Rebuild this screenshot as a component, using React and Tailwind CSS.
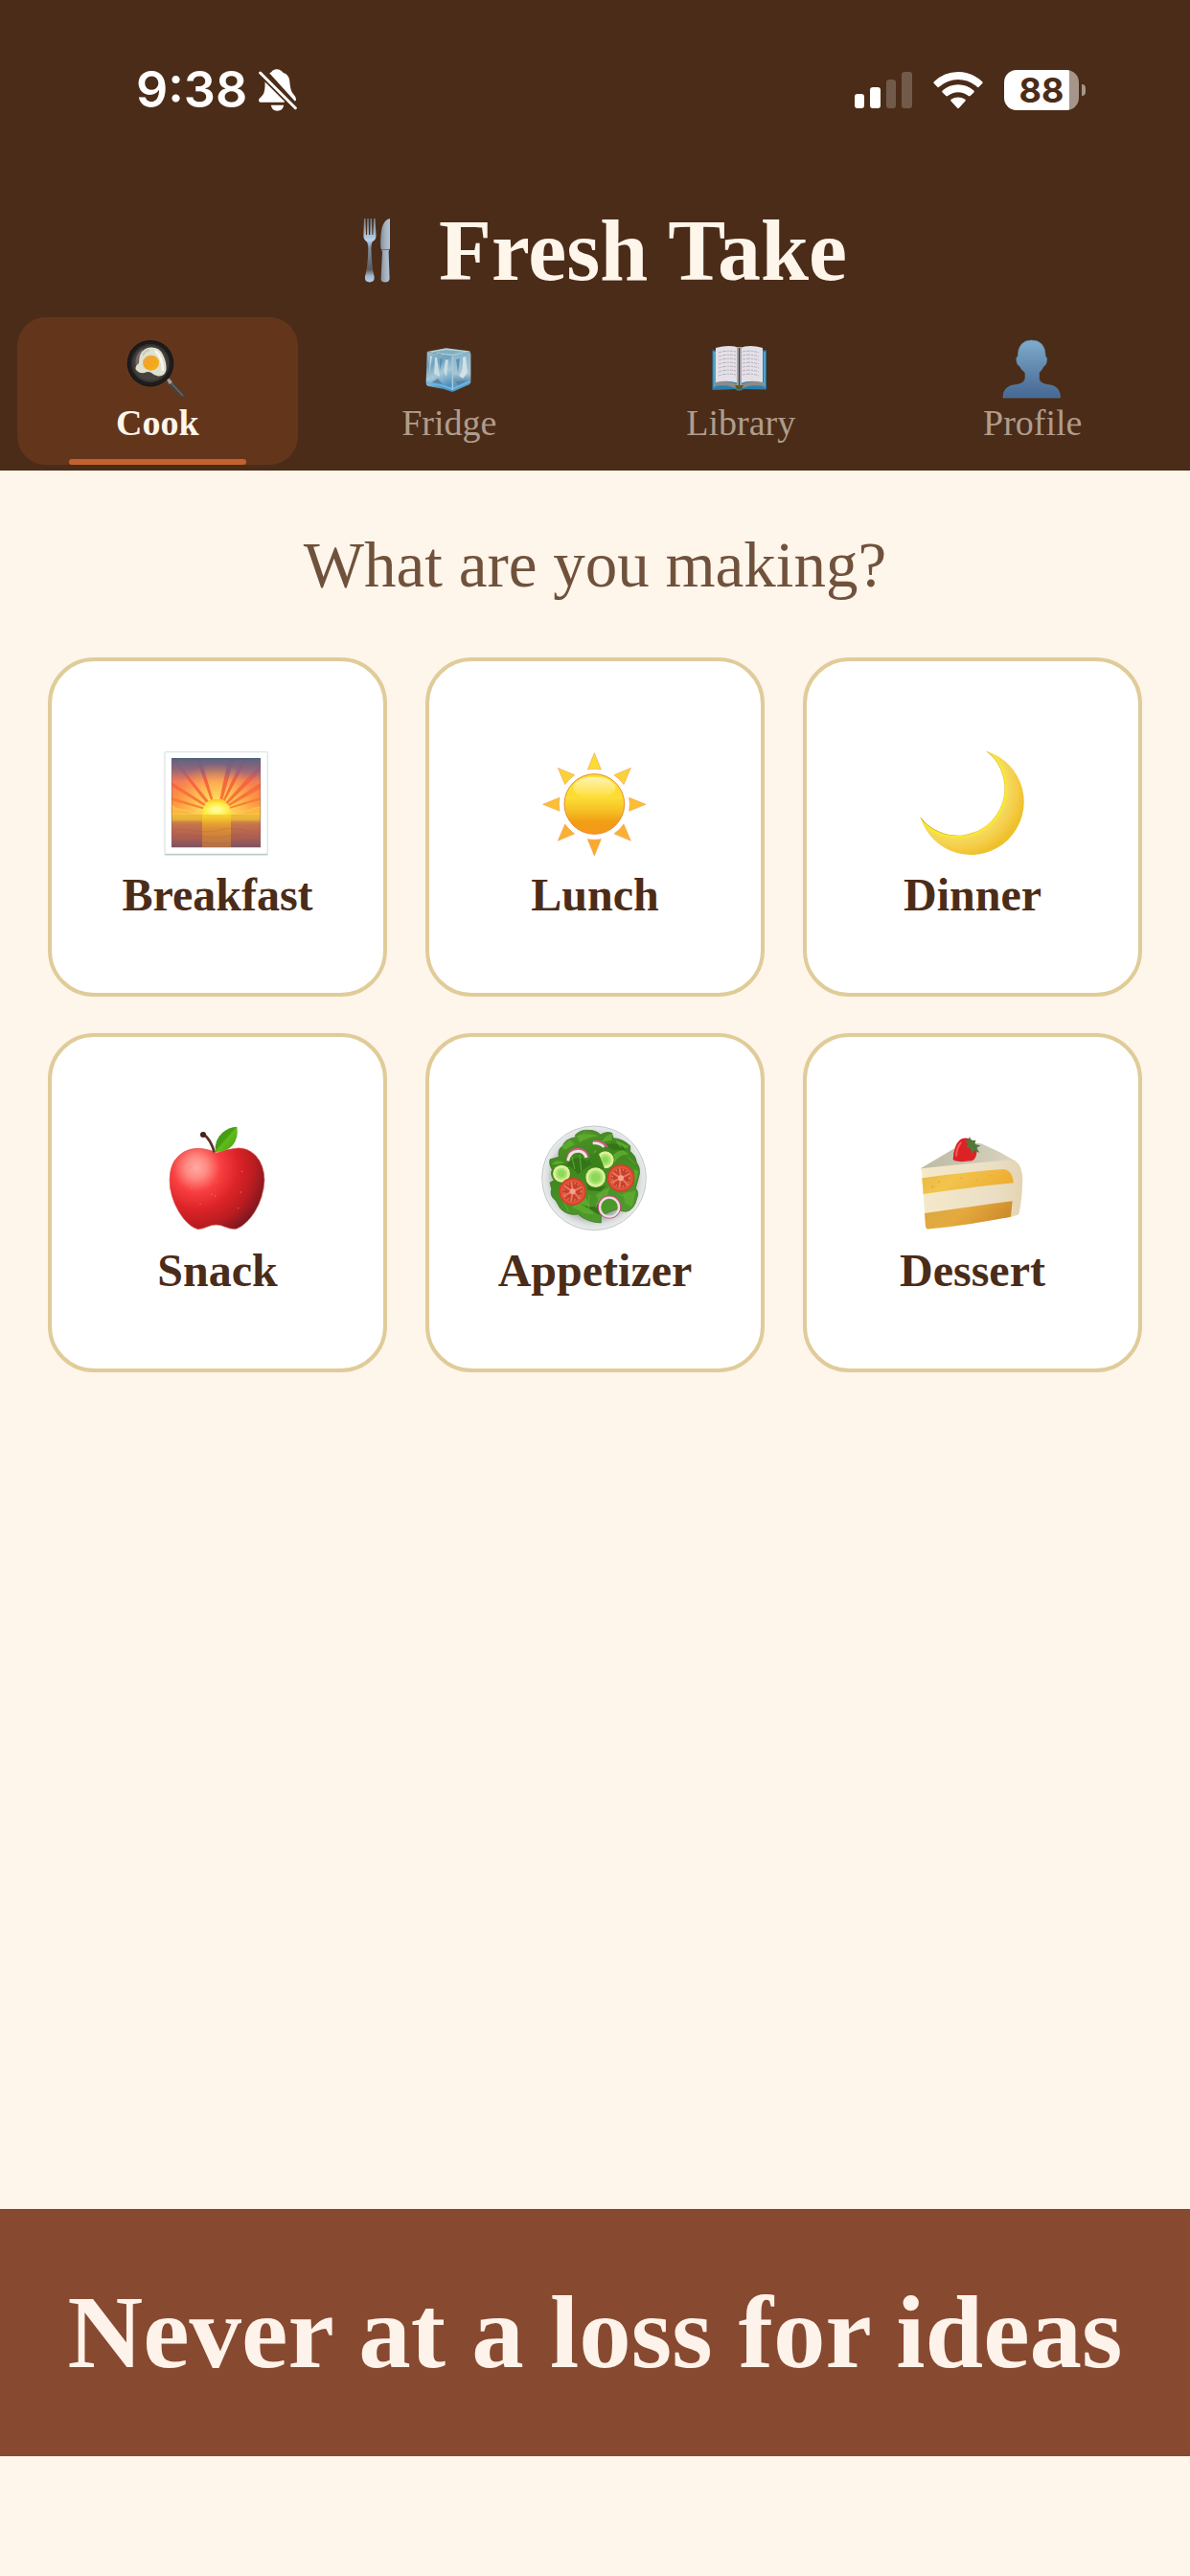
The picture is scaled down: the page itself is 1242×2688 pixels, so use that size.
import { useState } from "react"

function BellOffIcon() {
  return (
    <svg className="h-[44px] w-[40px]" viewBox="452 66 122 132" aria-hidden="true">
      <path
        fill="#fff"
        d="M472 106 L534 168 V171 H458 Q452 171 452 164 Q452 160 459 154 Q472 143 472 118 Z M486 78 Q492 76 496 70 Q503 66 510 66 Q520 66 525 72 Q530 78 538 80 Q551 90 551 108 Q553 132 560 142 Q571 154 571 162 Q571 167 567 167 Z M491 180 H532 Q529 198 511 198 Q494 198 491 180 Z"
      />
      <path d="M457 77 L569 189" stroke="#fff" strokeWidth="9" strokeLinecap="round" />
    </svg>
  )
}

function SignalIcon() {
  return (
    <svg className="h-[38px] w-[60px]" viewBox="0 0 60 38" fill="#fff" aria-hidden="true">
      <rect x="0" y="23" width="10" height="15" rx="3" />
      <rect x="16" y="16" width="11" height="22" rx="3" />
      <rect x="33" y="8" width="10" height="30" rx="3" opacity="0.22" />
      <rect x="49" y="0" width="11" height="38" rx="3" opacity="0.22" />
    </svg>
  )
}

function WifiIcon() {
  return (
    <svg className="h-[38px] w-[52px]" viewBox="310 72 157 115" fill="#fff" aria-hidden="true">
      <path d="M312 103 Q345 72 388.500 72 Q432 72 465 103 Q467 106 465 108 L454 120 Q451 122 448 119 Q422 96 388.500 96 Q355 96 329 119 Q326 122 323 120 L312 108 Q310 106 312 103 Z" />
      <path d="M339 131 Q361 112 388.500 112 Q416 112 438 131 Q441 134 438 137 L427 148 Q424 151 421 148 Q407 136 388.500 136 Q370 136 356 148 Q353 151 350 148 L339 137 Q336 134 339 131 Z" />
      <path d="M366 159 Q376 152 388.500 152 Q401 152 411 159 Q413 162 411 164 L391 186 Q388.500 188 386 186 L366 164 Q364 162 366 159 Z" />
    </svg>
  )
}

function Battery() {
  return (
    <div className="flex items-center gap-[3px]">
      <div className="flex h-[42px] w-[78px] items-center justify-center rounded-[13px] bg-linear-to-r from-white from-87% to-[#a5958a] to-87% text-[36px] leading-[42px] font-bold text-[#4b2c18]">
        88
      </div>
      <div className="h-3 w-1 rounded-r-full bg-[#a5958a]" />
    </div>
  )
}

function CutleryIcon() {
  return (
    <svg className="size-[70px]" viewBox="0 0 70 70" aria-hidden="true">
      <defs>
        <linearGradient id="fork" x1="0" y1="0" x2="0" y2="1">
          <stop offset="0" stopColor="#6f7d89" />
          <stop offset="0.34" stopColor="#b9d2ec" />
          <stop offset="0.45" stopColor="#8093a6" />
          <stop offset="0.8" stopColor="#5b5a5b" />
          <stop offset="0.9" stopColor="#a3b6cb" />
          <stop offset="1" stopColor="#b5cfeb" />
        </linearGradient>
        <linearGradient id="knife" x1="0" y1="0" x2="1" y2="0">
          <stop offset="0" stopColor="#7f90a2" />
          <stop offset="0.5" stopColor="#a8b0b9" />
          <stop offset="1" stopColor="#a9c6e2" />
        </linearGradient>
      </defs>
      <path
        fill="url(#fork)"
        d="M22 1 H23.500 L24 18 H25 L25.300 1 H26.700 L27 18 H28.300 L28.600 1 H30 L30.400 18 H31.400 L32 1 H33.600 L34.500 19 Q34.500 23 31 25 Q29.300 27 29.400 33 Q30 52 32.700 62 Q33 67.500 27.800 67.500 Q22.600 67.500 22.900 62 Q26 50 26.300 33 Q26.300 27 24.600 25 Q21.400 23 21.400 19 Z"
      />
      <path
        fill="url(#knife)"
        d="M49 1 V32 Q47.800 34 47.600 36 L48.600 64 Q48 67.500 44 67.500 Q39.600 67.500 39.600 64 L41 36 Q40.800 34 39.400 32 Q38.600 21 40.500 11 Q43 2 49 1 Z"
      />
      <path d="M40.500 33.500 H48" stroke="#65717d" strokeWidth="1" />
    </svg>
  )
}

function PanIcon() {
  return (
    <svg className="size-16" viewBox="0 0 64 64" aria-hidden="true">
      <defs>
        <radialGradient id="pan">
          <stop offset="0.7" stopColor="#47413f" />
          <stop offset="0.85" stopColor="#2a2928" />
          <stop offset="1" stopColor="#101212" />
        </radialGradient>
        <linearGradient id="yolk" x1="0" y1="0" x2="1" y2="1">
          <stop offset="0" stopColor="#e8a35a" />
          <stop offset="0.5" stopColor="#f5a61b" />
          <stop offset="1" stopColor="#efb320" />
        </linearGradient>
      </defs>
      <path d="M42 43 L45 42 L61 60 Q62 63 58 61.500 Q49 55 42 45 Z" fill="#414345" />
      <path d="M46 46 L59 60" stroke="#6d6a69" strokeWidth="1.200" />
      <path d="M42 43 L45 42 L48 46 L44.500 48 Z" fill="#a79f99" />
      <ellipse cx="25" cy="26.200" rx="24.300" ry="24.200" fill="url(#pan)" />
      <ellipse cx="25" cy="26" rx="21" ry="21" fill="none" stroke="#1b1b1b" strokeWidth="1.500" />
      <path d="M10 30 Q7 18 17 11 L14 30 Z" fill="#756766" />
      <path
        d="M25 9.600 Q34 9 38 17 Q42 25 41.500 33 Q40 40 33 39.500 Q29 39 26 36 Q22 34 19 36 Q12 37 9.500 32 Q9 29 13 26 Q13 11 25 9.600 Z"
        fill="#dfe1cf"
      />
      <path d="M30 13 Q38 20 38 34" fill="none" stroke="#f7f7ee" strokeWidth="2.500" />
      <path d="M17 18 Q19 13 24 12" fill="none" stroke="#c5cab6" strokeWidth="2" />
      <ellipse cx="25.600" cy="25.700" rx="8.500" ry="8" fill="url(#yolk)" />
    </svg>
  )
}

function IceIcon() {
  return (
    <svg className="size-16" viewBox="0 0 64 64" aria-hidden="true">
      <defs>
        <linearGradient id="iceLeft" x1="0" y1="0" x2="0.300" y2="1">
          <stop offset="0" stopColor="#9fc3d1" />
          <stop offset="0.35" stopColor="#6fa1be" />
          <stop offset="0.65" stopColor="#a9c8d6" />
          <stop offset="1" stopColor="#4c91c0" />
        </linearGradient>
        <linearGradient id="iceRight" x1="0" y1="0" x2="0" y2="1">
          <stop offset="0" stopColor="#86b2c8" />
          <stop offset="0.55" stopColor="#a6c6d4" />
          <stop offset="0.7" stopColor="#6e9cb8" />
          <stop offset="1" stopColor="#4e97c9" />
        </linearGradient>
      </defs>
      <path d="M8.800 14 L28.600 10.300 L54 13.500 L35.300 19 Z" fill="#b7d6de" />
      <path d="M13 14.500 L28.600 12 L48 14 L35.300 17 Z" fill="#7fb0c0" />
      <path d="M8.800 14 Q22 17 35.300 18 V56 Q24 52 10 50 Q7.500 49 7.600 46 Z" fill="url(#iceLeft)" />
      <path d="M35.300 18 L52 13.500 Q54.500 14 54.400 17 V45 Q54.400 48 51 49 L35.300 56 Z" fill="url(#iceRight)" />
      <path d="M12 18 L14 19 L11 37 Z M17 20 H19 L22 40 L16 37 Z M28 22 L31 23 L29 40 L26 34 Z" fill="#c6dde5" />
      <path d="M22 21 L25 22 L22 33 Z M39 22 L43 21 L41 36 Z" fill="#5b91b2" />
      <path d="M46 20 L49 19 L51 36 L46 42 L42 39 Q47 34 46 20 Z" fill="#cfe1e9" />
      <path d="M12 47 L20 42 L27 51 Z M38 45 L50 44 L42 50 Z" fill="#5886a2" />
      <path d="M8 46 Q22 48 35.300 53 L53.500 45" fill="none" stroke="#69b5e4" strokeWidth="2" />
      <path d="M35.300 19 V54" stroke="#a5cbd9" strokeWidth="1.500" />
    </svg>
  )
}

function BookIcon() {
  const lines = [14, 18, 22, 26, 30, 34, 38]

  return (
    <svg className="size-16" viewBox="0 0 64 64" aria-hidden="true">
      <path d="M2.500 12.500 H58.800 V53.500 L35 53 Q30 56.500 26 53 L2.500 54 Z" fill="#2880ad" />
      <path d="M3.500 14 H6 V50 L3.500 52 Z M56 14 H58 V52 L56 50 Z" fill="#4fa5cb" />
      <path d="M5.500 46 Q18 43 30.500 49 Q43 43 56 46 V50 Q42 48 34 52 H27 Q17 48 5.500 50 Z" fill="#8f8b86" />
      <path d="M6 10 Q21 6 30 10 V47 Q19 43 6 46 Z" fill="#e4e0e7" />
      <path d="M31.500 10 Q41 6 55 10 V46 Q42 43 31.500 47 Z" fill="#e4e0e7" />
      <path d="M28 9 H33 V49 H28 Z" fill="#aaa6ac" />
      <path d="M30.500 10 V49" stroke="#3d3939" strokeWidth="1.200" />
      {lines.map((y) => (
        <path
          key={y}
          d={`M9 ${y + 1} Q18 ${y - 2} 27 ${y} M34 ${y} Q43 ${y - 2} 51 ${y + 1}`}
          fill="none"
          stroke="#b4aebb"
          strokeWidth="1"
          strokeDasharray="3 1 4 1 2 1"
        />
      ))}
      <path d="M26 49 H35 L33 53 H28 Z" fill="#5d5d20" />
    </svg>
  )
}

function ProfileIcon() {
  return (
    <svg className="size-16" viewBox="0 0 64 64" aria-hidden="true">
      <defs>
        <linearGradient id="person" x1="0" y1="0" x2="0" y2="1">
          <stop offset="0" stopColor="#7faccc" />
          <stop offset="0.5" stopColor="#6188ae" />
          <stop offset="1" stopColor="#456795" />
        </linearGradient>
      </defs>
      <path
        fill="url(#person)"
        stroke="#5d84a4"
        strokeWidth="0.600"
        d="M30.700 2 Q45 2 45.300 19 Q47.500 20 46.500 24 Q46 28 43.500 29 Q41.500 33 38.500 36 V42 Q39 47 47 48.500 Q60.500 49 60.500 62 H1 Q1 49 15 48.500 Q23 47 24 42 V36 Q20 33 18 29 Q15.500 28 15 24 Q14 20 16.200 19 Q16.500 2 30.700 2 Z"
      />
    </svg>
  )
}

function SunriseIcon() {
  return (
    <svg className="size-28" viewBox="423 336 336 336" aria-hidden="true">
      <defs>
        <linearGradient id="sky" x1="0" y1="363" x2="0" y2="642" gradientUnits="userSpaceOnUse">
          <stop offset="0" stopColor="#59647f" />
          <stop offset="0.12" stopColor="#8f667b" />
          <stop offset="0.27" stopColor="#f77b55" />
          <stop offset="0.5" stopColor="#ff9139" />
          <stop offset="0.62" stopColor="#f9a636" />
          <stop offset="0.66" stopColor="#e5b53c" />
          <stop offset="0.74" stopColor="#c8744a" />
          <stop offset="0.9" stopColor="#ab5d50" />
          <stop offset="1" stopColor="#7b5263" />
        </linearGradient>
        <radialGradient id="glow" cx="587" cy="530" r="150" gradientUnits="userSpaceOnUse">
          <stop offset="0.2" stopColor="#ffe65a" />
          <stop offset="0.6" stopColor="#ffc255" stopOpacity="0.7" />
          <stop offset="1" stopColor="#ff9a4a" stopOpacity="0" />
        </radialGradient>
        <radialGradient id="sunDisc" cx="0.500" cy="0.700" r="0.700">
          <stop offset="0.2" stopColor="#fffb8f" />
          <stop offset="0.7" stopColor="#fde83f" />
          <stop offset="1" stopColor="#f8c21c" />
        </radialGradient>
        <linearGradient id="ray" x1="0" y1="363" x2="0" y2="530" gradientUnits="userSpaceOnUse">
          <stop offset="0" stopColor="#5f5f86" />
          <stop offset="0.25" stopColor="#9a6078" />
          <stop offset="0.42" stopColor="#f4623f" />
          <stop offset="1" stopColor="#fb8a33" />
        </linearGradient>
        <linearGradient id="reflection" x1="0" y1="0" x2="0" y2="1">
          <stop offset="0" stopColor="#fbd92c" />
          <stop offset="0.4" stopColor="#e5972f" />
          <stop offset="1" stopColor="#b87442" />
        </linearGradient>
      </defs>
      <rect x="426" y="344" width="322" height="323" rx="3" fill="#fff" stroke="#dce5e5" strokeWidth="4" />
      <path d="M427 664 H747" stroke="#bccccc" strokeWidth="4" />
      <rect x="447" y="363" width="279" height="280" rx="2" fill="url(#sky)" />
      <path d="M447 380 H726 V540 H447 Z" fill="url(#glow)" />
      <path
        fill="url(#ray)"
        d="M447 365 H457 L563 497 L555 503 Z M524 365 H539 L577 492 L570 494 Z M625 365 H643 L607 494 L598 491 Z M668 365 H685 L614 498 L608 495 Z M726 381 V405 L622 508 L616 502 Z M726 440 V458 L628 514 L624 508 Z M726 485 V494 L631 521 L629 516 Z M447 438 V451 L550 514 L554 507 Z M447 486 V496 L546 523 L547 517 Z"
      />
      <path
        d="M447 511 Q457 515 461 522 Q475 519 482 526 Q497 524 505 532 Q516 532 518 540 H447 Z M726 514 Q714 519 710 519 Q700 517 694 527 Q680 525 673 533 Q665 532 660 540 H726 Z"
        fill="#fbb83f"
        stroke="#ffd268"
        strokeWidth="2"
      />
      <path d="M544 540 Q546 492 587 492 Q628 492 631 540 Z" fill="url(#sunDisc)" />
      <rect x="447" y="540" width="279" height="19" fill="#eeb934" opacity="0.6" />
      <rect x="543" y="540" width="90" height="102" fill="url(#reflection)" opacity="0.85" />
      <path
        d="M447 590 Q480 582 520 590 T600 588 T680 590 T726 586 M447 608 Q490 600 540 608 T640 606 T726 610 M447 626 Q500 618 550 627 T650 624 T726 628"
        fill="none"
        stroke="#8f4f55"
        strokeWidth="3"
        opacity="0.2"
      />
      <path d="M447 365 H726" stroke="#4a6175" strokeWidth="4" />
      <path d="M448 363 V642 M725 363 V642" stroke="#7e5f70" strokeWidth="1.500" />
    </svg>
  )
}

function SunIcon() {
  const rays = [
    { angle: 0, color: "#fbdc33" },
    { angle: 45, color: "#fbd234" },
    { angle: 90, color: "#fbbf31" },
    { angle: 135, color: "#fab132" },
    { angle: 180, color: "#f9a92c" },
    { angle: 225, color: "#fab132" },
    { angle: 270, color: "#fbbf31" },
    { angle: 315, color: "#fbd234" },
  ]

  return (
    <svg className="size-28" viewBox="405 336 336 336" aria-hidden="true">
      <defs>
        <linearGradient id="sunBall" x1="0" y1="0" x2="0" y2="1">
          <stop offset="0" stopColor="#fde02d" />
          <stop offset="0.4" stopColor="#fddc33" />
          <stop offset="0.6" stopColor="#f5c226" />
          <stop offset="0.8" stopColor="#f09e14" />
          <stop offset="1" stopColor="#f7971a" />
        </linearGradient>
        <linearGradient id="sunShine" x1="0" y1="0" x2="0" y2="1">
          <stop offset="0" stopColor="#fdf3b4" />
          <stop offset="1" stopColor="#fdf3b4" stopOpacity="0" />
        </linearGradient>
      </defs>
      {rays.map((ray) => (
        <path
          key={ray.angle}
          d="M571 347 L592 399 Q571 395 550 399 Z"
          fill={ray.color}
          stroke="#f0a65a"
          strokeWidth="2"
          transform={`rotate(${ray.angle} 571 508)`}
        />
      ))}
      <circle cx="571" cy="507" r="94" fill="url(#sunBall)" stroke="#ec8a2c" strokeWidth="3" />
      <ellipse cx="571" cy="456" rx="66" ry="34" fill="url(#sunShine)" />
    </svg>
  )
}

function MoonIcon() {
  return (
    <svg className="size-28" viewBox="477 336 336 336" aria-hidden="true">
      <defs>
        <radialGradient id="moon" cx="597" cy="457" r="215" gradientUnits="userSpaceOnUse">
          <stop offset="0.68" stopColor="#a8741f" />
          <stop offset="0.7" stopColor="#fdea2c" />
          <stop offset="0.76" stopColor="#f3d75c" />
          <stop offset="0.88" stopColor="#f6cc45" />
          <stop offset="1" stopColor="#edc02c" />
        </radialGradient>
      </defs>
      <path d="M688 341 A166 166 0 1 1 481 547 A147.300 147.300 0 1 0 688 341 Z" fill="url(#moon)" />
    </svg>
  )
}

function AppleIcon() {
  return (
    <svg className="size-28" viewBox="423 342 336 336" aria-hidden="true">
      <defs>
        <radialGradient id="apple" cx="525" cy="475" r="235" gradientUnits="userSpaceOnUse">
          <stop offset="0" stopColor="#ffaca4" />
          <stop offset="0.15" stopColor="#ff8880" />
          <stop offset="0.32" stopColor="#f93f41" />
          <stop offset="0.55" stopColor="#dd2428" />
          <stop offset="0.78" stopColor="#b91c20" />
          <stop offset="1" stopColor="#741620" />
        </radialGradient>
        <linearGradient id="leaf" x1="0" y1="0" x2="1" y2="1">
          <stop offset="0.45" stopColor="#449d12" />
          <stop offset="0.52" stopColor="#63bb1b" />
          <stop offset="1" stopColor="#3d9a0d" />
        </linearGradient>
      </defs>
      <path
        d="M588 429 Q560 415 525 415 Q482 417 456 454 Q436 486 443 540 Q451 590 484 634 Q508 663 530 668 Q546 667 560 660 Q587 648 613 660 Q632 669 650 667 Q682 654 708 613 Q735 568 738 515 Q737 466 711 438 Q687 413 655 414 Q617 417 588 429 Z"
        fill="url(#apple)"
        stroke="#d45950"
        strokeWidth="2"
      />
      <path d="M548 371 Q571 389 581 427" fill="none" stroke="#5b3026" strokeWidth="8" />
      <circle cx="546" cy="372" r="9" fill="#482119" />
      <path d="M584 427 Q580 390 606 366 Q626 348 652 347 Q658 381 638 406 Q622 425 584 427 Z" fill="url(#leaf)" />
      <g fill="#f57070">
        <circle cx="587" cy="521" r="2" />
        <circle cx="573" cy="558" r="2" />
        <circle cx="584" cy="564" r="2" />
        <circle cx="537" cy="589" r="2" />
        <circle cx="668" cy="487" r="2" />
        <circle cx="664" cy="552" r="2" />
        <circle cx="509" cy="538" r="2" />
        <circle cx="656" cy="602" r="2" />
      </g>
    </svg>
  )
}

function Tomato({ x, y }) {
  return (
    <g transform={`translate(${x} ${y})`}>
      <circle r="43" fill="#d3402b" />
      <circle r="38" fill="#e2543d" />
      <circle r="31" fill="#c8402d" />
      <circle r="27" fill="none" stroke="#d9893f" strokeWidth="5" strokeDasharray="4 7" />
      <path
        d="M0 0 L-4 -30 M0 0 L28 -14 M0 0 L24 22 M0 0 L-5 31 M0 0 L-30 14 M0 0 L-26 -17"
        stroke="#ea735c"
        strokeWidth="6"
      />
      <circle r="9" fill="#f5a189" />
    </g>
  )
}

function Cucumber({ x, y, r }) {
  return (
    <g transform={`translate(${x} ${y})`}>
      <circle r={r + 2} fill="#3c7d18" />
      <circle r={r} fill="#daf096" />
      <circle r={r - 9} fill="#a7e26d" />
      <circle r={r - 17} fill="#8bd85b" />
    </g>
  )
}

function SaladIcon() {
  return (
    <svg className="size-28" viewBox="405 342 336 336" aria-hidden="true">
      <defs>
        <linearGradient id="greens" x1="0" y1="0" x2="0.400" y2="1">
          <stop offset="0" stopColor="#549d29" />
          <stop offset="0.4" stopColor="#3f861e" />
          <stop offset="1" stopColor="#4d9a2a" />
        </linearGradient>
        <radialGradient id="plate">
          <stop offset="0.75" stopColor="#a8b0ae" />
          <stop offset="0.9" stopColor="#dce1e0" />
          <stop offset="1" stopColor="#e9eded" />
        </radialGradient>
      </defs>
      <circle cx="570" cy="508" r="163" fill="url(#plate)" stroke="#c3c9c8" strokeWidth="3" />
      <path
        d="M512 372 Q530 355 552 358 Q578 358 590 372 Q608 360 626 367 L630 383 Q660 384 683 407 L683 424 Q702 440 703 458 Q716 475 712 496 L700 540 Q712 553 704 572 Q696 607 671 613 Q652 613 645 604 L592 625 L592 648 Q547 646 520 621 Q488 627 464 603 L450 578 Q430 564 437 542 L432 522 L445 515 Q431 496 439 482 Q427 464 432 449 L460 442 Q455 417 472 408 Q477 386 512 380 Z"
        fill="url(#greens)"
        stroke="#3d6b21"
        strokeWidth="2"
      />
      <path
        d="M515 375 Q552 364 585 376 Q550 380 525 397 Z M592 395 Q610 370 627 369 L625 390 Z M637 388 L681 409 L660 419 Z M625 440 Q660 405 678 436 Q650 430 635 460 Z M437 465 Q452 445 478 460 L455 466 Z M500 600 L545 570 L570 620 Q540 625 525 610 Z M660 555 L700 548 L690 598 L668 588 Z M695 480 L710 486 L698 528 Z M575 560 L620 535 L610 570 L585 580 Z M468 408 L495 388 L510 402 L478 420 Z"
        fill="#5aa82d"
      />
      <path
        d="M483 465 Q515 430 548 455 L575 435 L603 478 L555 468 L520 495 L500 475 Z M545 520 Q570 545 610 530 L590 550 L550 545 Z M530 590 Q570 605 582 590 L590 625 Z M600 405 Q650 390 670 420 L630 420 Z"
        fill="#347518"
      />
      <path
        d="M500 440 L510 480 M525 435 L530 485 M575 420 L560 455 M640 395 L655 412 M555 560 L553 620 M590 560 L575 600 M650 560 L682 570 M675 440 L700 465 M540 365 L530 390 M465 560 L490 612"
        fill="none"
        stroke="#64a93a"
        strokeWidth="3"
      />
      <path d="M486 452 Q490 416 520 416 Q546 417 552 443" fill="none" stroke="#d9528b" strokeWidth="6" />
      <path d="M488 454 Q494 424 520 424 Q540 424 546 444" fill="none" stroke="#f0e4e3" strokeWidth="9" />
      <path d="M567 394 Q592 386 612 411" fill="none" stroke="#d9528b" strokeWidth="6" />
      <path d="M566 399 Q588 396 601 411" fill="none" stroke="#f0e4e3" strokeWidth="8" />
      <Cucumber x={605} y={451} r={27} />
      <path d="M560 436 L582 425 L604 480 L562 472 Z" fill="#3c821b" />
      <Cucumber x={468} y={494} r={27} />
      <Cucumber x={575} y={506} r={31} />
      <Tomato x={503} y={550} />
      <Tomato x={654} y={508} />
      <circle cx="618" cy="598" r="34" fill="none" stroke="#c94981" strokeWidth="5" />
      <circle cx="618" cy="599" r="30" fill="none" stroke="#e9dfdd" strokeWidth="7" />
    </svg>
  )
}

function CakeIcon() {
  return (
    <svg className="size-28" viewBox="477 342 336 336" aria-hidden="true">
      <defs>
        <linearGradient id="icing" x1="0" y1="0" x2="1" y2="0">
          <stop offset="0" stopColor="#f6e9ca" />
          <stop offset="0.7" stopColor="#eadfc5" />
          <stop offset="1" stopColor="#e5d4b2" />
        </linearGradient>
        <linearGradient id="sponge" x1="0" y1="0" x2="1" y2="0.300">
          <stop offset="0" stopColor="#e9b740" />
          <stop offset="0.4" stopColor="#f2c44e" />
          <stop offset="1" stopColor="#eeae33" />
        </linearGradient>
        <linearGradient id="spongeBase" x1="0" y1="0" x2="1" y2="0.300">
          <stop offset="0" stopColor="#d8a843" />
          <stop offset="0.5" stopColor="#e5aa3e" />
          <stop offset="1" stopColor="#cf8d2c" />
        </linearGradient>
        <linearGradient id="cakeTop" x1="0" y1="0" x2="1" y2="0">
          <stop offset="0" stopColor="#bdbca4" />
          <stop offset="0.5" stopColor="#c8c5b2" />
          <stop offset="1" stopColor="#dcd5c0" />
        </linearGradient>
      </defs>
      <path d="M485 476 L610 402 Q640 396 672 400 Q730 424 782 456 L740 462 Q600 466 485 482 Z" fill="url(#cakeTop)" />
      <path
        d="M485 478 Q600 465 730 454 Q760 449 780 455 Q800 468 802 510 Q801 570 791 617 Q790 624 782 625 L765 629 Q630 655 510 667 Q498 669 498 658 Z"
        fill="url(#icing)"
      />
      <path d="M487 508 Q610 490 740 480 Q768 480 774 523 Q620 538 491 558 Z" fill="url(#sponge)" />
      <path d="M495 618 Q620 599 770 580 L765 629 Q630 655 510 667 Q498 669 498 658 Z" fill="url(#spongeBase)" />
      <g fill="#d99c2b" opacity="0.5">
        <circle cx="540" cy="520" r="3" />
        <circle cx="520" cy="535" r="4" />
        <circle cx="610" cy="508" r="3" />
        <circle cx="660" cy="515" r="3" />
        <circle cx="700" cy="500" r="3" />
        <circle cx="600" cy="628" r="3" />
        <circle cx="690" cy="612" r="3" />
      </g>
      <path
        d="M584 450 Q586 405 606 388 Q620 377 642 388 Q662 405 658 430 Q655 450 643 454 Q605 459 590 454 Z"
        fill="#dd2226"
      />
      <path d="M594 440 Q595 410 610 396" fill="none" stroke="#f25a55" strokeWidth="6" />
      <path
        d="M636 377 L641 391 L655 389 L652 402 L670 406 L658 413 L667 429 L650 421 L644 432 L638 415 L625 410 L632 402 L620 389 L632 390 Z"
        fill="#4d7a3b"
      />
    </svg>
  )
}

const tabs = [
  { name: "Cook", icon: PanIcon },
  { name: "Fridge", icon: IceIcon },
  { name: "Library", icon: BookIcon },
  { name: "Profile", icon: ProfileIcon },
]

const meals = [
  { name: "Breakfast", icon: SunriseIcon },
  { name: "Lunch", icon: SunIcon },
  { name: "Dinner", icon: MoonIcon },
  { name: "Snack", icon: AppleIcon },
  { name: "Appetizer", icon: SaladIcon },
  { name: "Dessert", icon: CakeIcon },
]

export default function App() {
  const [activeTab, setActiveTab] = useState("Cook")

  return (
    <div className="flex min-h-screen flex-col bg-[#fef5eb] font-['Liberation_Serif',serif]">
      <header className="bg-[#4b2c18] pb-1.5">
        {/* Status bar */}
        <div className="flex h-[188px] items-center justify-between pr-[109px] pl-[142px] font-['Inter',sans-serif] text-white">
          <div className="flex items-center gap-3">
            <span className="text-[52px] leading-none font-semibold">9:38</span>
            <BellOffIcon />
          </div>
          <div className="flex items-center gap-[22px]">
            <SignalIcon />
            <WifiIcon />
            <Battery />
          </div>
        </div>

        <div className="mt-[26px] mb-[21px] flex items-center justify-center gap-[30px]">
          <CutleryIcon />
          <h1 className="text-[90px] leading-[96px] font-bold text-[#fef5eb]">Fresh Take</h1>
        </div>

        <nav className="grid grid-cols-4 gap-3 px-[18px]">
          {tabs.map((tab) => {
            const isActive = tab.name === activeTab
            const Icon = tab.icon

            return (
              <button
                key={tab.name}
                type="button"
                onClick={() => setActiveTab(tab.name)}
                className={`relative flex flex-col items-center gap-0.5 rounded-[30px] py-[22px] text-[38px] leading-[44px] ${
                  isActive ? "bg-[#63361c] font-bold text-[#fef5eb]" : "text-[#b09c8c]"
                }`}
              >
                <Icon />
                {tab.name}
                {isActive && <span className="absolute inset-x-[54px] bottom-0 h-1.5 rounded-full bg-[#c4622d]" />}
              </button>
            )
          })}
        </nav>
      </header>

      <main className="flex-1 px-[50px] pt-[60px]">
        <h2 className="text-center text-[67px] leading-[76px] text-[#70523c]">What are you making?</h2>
        <div className="mt-[59px] grid grid-cols-3 gap-x-10 gap-y-[38px]">
          {meals.map((meal) => {
            const Icon = meal.icon

            return (
              <button
                key={meal.name}
                type="button"
                className="flex aspect-square flex-col items-center justify-center gap-4 rounded-[48px] border-4 border-[#e0cc99] bg-white pt-3.5 text-[48px] leading-[48px] font-bold text-[#4b2c18]"
              >
                <Icon />
                {meal.name}
              </button>
            )
          })}
        </div>
      </main>

      <footer className="pb-[125px]">
        <p className="bg-[#884931] py-[69px] text-center text-[109px] leading-[120px] font-bold whitespace-nowrap text-[#fdf3ea]">
          Never at a loss for ideas
        </p>
      </footer>
    </div>
  )
}
